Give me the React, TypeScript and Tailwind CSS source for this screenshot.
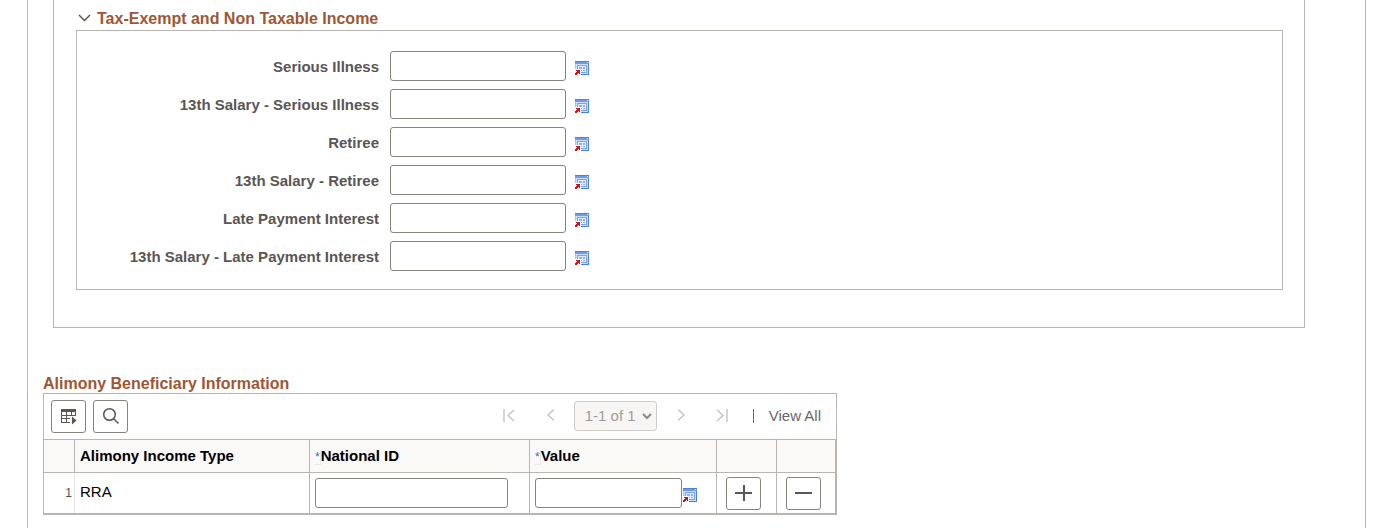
import { useState } from 'react'

const incomeFields = [
  { id: 'serious-illness', label: 'Serious Illness' },
  { id: 'serious-illness-13', label: '13th Salary - Serious Illness' },
  { id: 'retiree', label: 'Retiree' },
  { id: 'retiree-13', label: '13th Salary - Retiree' },
  { id: 'late-payment', label: 'Late Payment Interest' },
  { id: 'late-payment-13', label: '13th Salary - Late Payment Interest' },
]

const inputClass = 'h-[30px] rounded-[3px] border border-[#87837d] bg-white px-2 text-sm'
const iconButtonClass =
  'flex h-[33px] w-[35px] items-center justify-center rounded-[3px] border border-[#87837d] bg-white text-[#5a5653]'

function CurrencyIcon() {
  return (
    <svg width="14" height="14" viewBox="0 0 14 14" shapeRendering="crispEdges" aria-hidden="true">
      <rect width="14" height="14" fill="#a9c5f5" />
      <path d="M13 0h1v14H5v-1h8z" fill="#4f7fd6" />
      <rect width="14" height="3" fill="#6f9bec" />
      <rect width="14" height="1" fill="#5580d2" />
      <rect x="12" y="1" width="1" height="1" fill="#e6effe" />
      <rect x="1" y="3" width="12" height="10" fill="#cfdffb" />
      <rect x="2" y="4" width="10" height="8" fill="#7ba4ee" />
      <rect x="3" y="5" width="8" height="6" fill="#e1ebfd" />
      <path d="M4 6h3v2H4zM8 6h2v2H8zM5 9h2v1H5zM8 9h2v1H8z" fill="#8fb2f0" />
      <path d="M0 8h5v1h1v5H0z" fill="#fff" />
      <path d="M1 9h4v4H4v-1H3v1H2v1H0v-2h1v-1h1v-1H1z" fill="#c4161c" />
    </svg>
  )
}

function CurrencyButton({ label }: { label: string }) {
  return (
    <button type="button" aria-label={label} className="mt-1 shrink-0">
      <CurrencyIcon />
    </button>
  )
}

function PageButton({ label, path }: { label: string; path: string }) {
  return (
    <button type="button" disabled aria-label={label} className="flex h-[30px] w-[38px] items-center justify-center pb-[2px] text-[#c6c3c0]">
      <svg width="12" height="14" viewBox="0 0 12 14" fill="none" stroke="currentColor" strokeWidth="1.4" aria-hidden="true">
        <path d={path} />
      </svg>
    </button>
  )
}

function TaxExemptSection() {
  const [open, setOpen] = useState(true)

  return (
    <section className="mr-[60px] ml-[25px] border border-t-0 border-[#bab5b0] pt-[7px] pr-[21px] pb-[37px] pl-[22px]">
      <h2 className="text-base leading-[23px] font-bold text-[#9e5732]">
        <button type="button" aria-expanded={open} onClick={() => setOpen(!open)} className="flex items-center gap-[6px] pl-[2px]">
          <svg width="13" height="13" viewBox="0 0 13 13" fill="none" stroke="#55514e" strokeWidth="1.4" aria-hidden="true">
            <path d="M1 3l5.5 5.5L12 3" />
          </svg>
          Tax-Exempt and Non Taxable Income
        </button>
      </h2>
      {open && (
        <div className="flex flex-col gap-2 border border-[#bab5b0] pt-5 pb-[18px]">
          {incomeFields.map((field) => (
            <div key={field.id} className="flex items-center">
              <label htmlFor={field.id} className="mr-[11px] w-[302px] pt-[2px] text-right text-[15px] font-bold text-[#5a5653]">
                {field.label}
              </label>
              <input id={field.id} type="text" className={`${inputClass} mr-[9px] w-[176px]`} />
              <CurrencyButton label={`${field.label} currency`} />
            </div>
          ))}
        </div>
      )}
    </section>
  )
}

function GridToolbar() {
  return (
    <div className="flex items-center justify-between border border-b-0 border-[#bab5b0] pt-[6px] pr-[15px] pb-[6px] pl-[7px]">
      <div className="flex gap-[7px]">
        <button type="button" aria-label="Grid actions" className={iconButtonClass}>
          <svg width="17" height="18" viewBox="0 0 17 18" fill="none" aria-hidden="true">
            <path d="M1 1h15v3H1z" fill="currentColor" />
            <path d="M1.5 3v12M6.5 3v12M11.5 3v5M15.5 3v4M1 7.5h15M1 10.5h9M1 14.5h9" stroke="currentColor" />
            <path d="M12 8.5l4.5 4-4.5 4z" fill="currentColor" />
          </svg>
        </button>
        <button type="button" aria-label="Find" className={iconButtonClass}>
          <svg width="17" height="19" viewBox="0 0 17 19" fill="none" stroke="currentColor" strokeWidth="1.5" aria-hidden="true">
            <circle cx="7.5" cy="7.5" r="5.8" />
            <path d="M11.7 11.7l4.8 4.8" />
          </svg>
        </button>
      </div>
      <div className="flex items-center gap-1 pb-px text-[15px] text-[#6b6764]">
        <PageButton label="First" path="M1 1v13M11 2L5 7.5l6 5.5" />
        <PageButton label="Previous" path="M9 1.5L3 7l6 5.5" />
        <div className="relative">
          <select
            disabled
            aria-label="Rows"
            className="h-[30px] w-[83px] appearance-none rounded-[3px] border border-[#cfccc8] bg-[#f7f6f5] pl-[10px] text-[#a09d9a] opacity-100"
          >
            <option>1-1 of 1</option>
          </select>
          <svg
            width="10"
            height="10"
            viewBox="0 0 10 10"
            fill="none"
            stroke="#8d8a87"
            strokeWidth="2"
            className="pointer-events-none absolute top-[10px] right-[5px]"
            aria-hidden="true"
          >
            <path d="M1 3l4 4 4-4" />
          </svg>
        </div>
        <PageButton label="Next" path="M4 1.5L10 7l-6 5.5" />
        <PageButton label="Last" path="M1 2l6 5.5L1 13M11 1v13" />
        <span className="mx-2 h-[14px] w-px bg-[#77684f]" />
        <a href="#" className="ml-[3px]">
          View All
        </a>
      </div>
    </div>
  )
}

function Required() {
  return <span className="border-r border-b border-[#e6e8ea] text-xs leading-none font-normal text-[#2d76b5]">*</span>
}

function AlimonySection() {
  return (
    <section className="mt-[46px] ml-[15px] w-fit">
      <h2 className="text-base leading-[19px] font-bold text-[#9e5732]">Alimony Beneficiary Information</h2>
      <GridToolbar />
      <table className="table-fixed border-separate border-spacing-0 border-t border-r-2 border-b-2 border-l border-[#bab5b0] text-left text-[15px] text-black">
        <thead>
          <tr className="h-[33px] bg-[#faf9f8]">
            <th aria-label="Row" className="w-[31px] border-r border-b border-[#bab5b0]" />
            <th className="w-[235px] border-r border-b border-[#bab5b0] pl-[5px]">Alimony Income Type</th>
            <th id="national-id" className="w-[220px] border-r border-b border-[#bab5b0] pl-[5px]">
              <Required />
              National ID
            </th>
            <th id="value" className="w-[187px] border-r border-b border-[#bab5b0] pl-[5px]">
              <Required />
              Value
            </th>
            <th aria-label="Add" className="w-[60px] border-r border-b border-[#bab5b0]" />
            <th aria-label="Delete" className="w-[58px] border-b border-[#bab5b0]" />
          </tr>
        </thead>
        <tbody>
          <tr className="h-10">
            <td className="border-r border-[#e5e3e1] pr-[2px] text-right text-xs text-[#55514e]">1</td>
            <td className="border-r border-[#bab5b0] pb-[2px] pl-[5px]">RRA</td>
            <td className="border-r border-[#bab5b0] pl-[5px]">
              <input type="text" aria-labelledby="national-id" className={`${inputClass} block w-[193px]`} />
            </td>
            <td className="border-r border-[#bab5b0] pl-[5px]">
              <div className="flex items-center gap-px">
                <input type="text" aria-labelledby="value" className={`${inputClass} w-[147px]`} />
                <CurrencyButton label="Value currency" />
              </div>
            </td>
            <td className="border-r border-[#bab5b0] pl-[9px]">
              <button type="button" aria-label="Add row" className={iconButtonClass}>
                <svg width="17" height="17" viewBox="0 0 17 17" stroke="currentColor" strokeWidth="2" aria-hidden="true">
                  <path d="M0 8h17M9 0v16" />
                </svg>
              </button>
            </td>
            <td className="pl-[9px]">
              <button type="button" aria-label="Delete row" className={iconButtonClass}>
                <svg width="17" height="17" viewBox="0 0 17 17" stroke="currentColor" strokeWidth="2" aria-hidden="true">
                  <path d="M0 8h17" />
                </svg>
              </button>
            </td>
          </tr>
        </tbody>
      </table>
    </section>
  )
}

export default function App() {
  return (
    <main className="mr-[9px] ml-[27px] min-h-screen border-x border-[#bab5b0] bg-white font-['Liberation_Sans',Arial,sans-serif]">
      <TaxExemptSection />
      <AlimonySection />
    </main>
  )
}
